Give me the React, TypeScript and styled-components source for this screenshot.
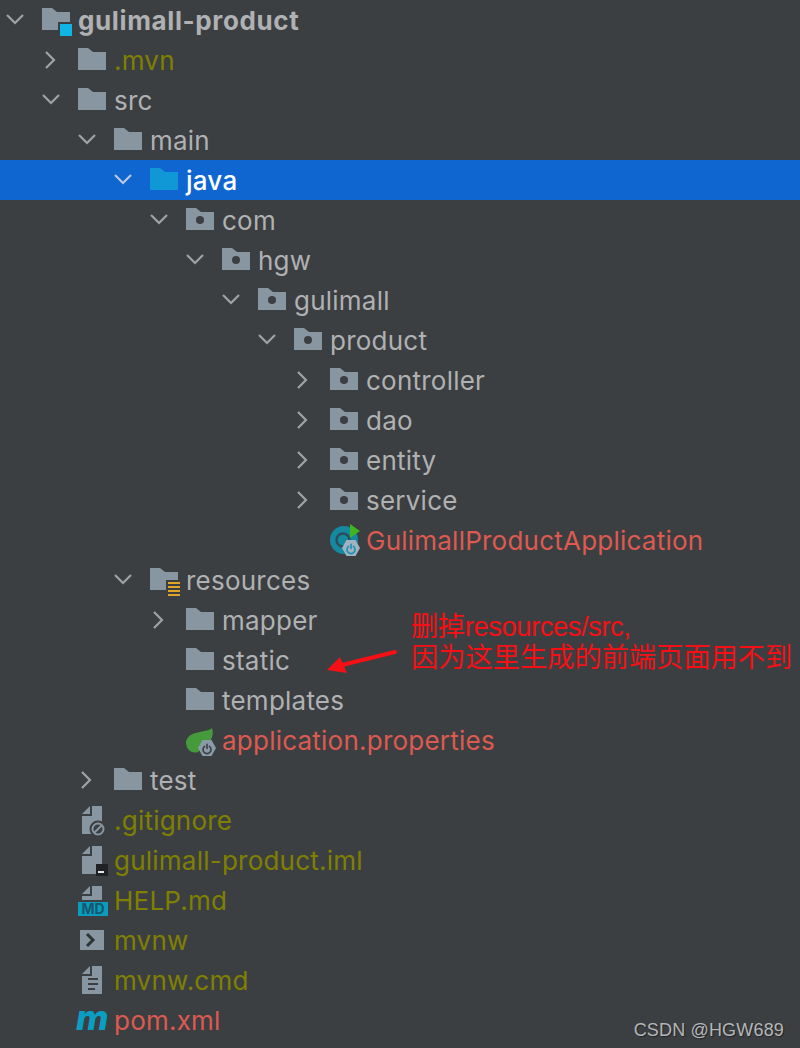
import styled, {createGlobalStyle} from "styled-components";

const GlobalStyle = createGlobalStyle`
  html, body {
    margin: 0;
    padding: 0;
    background: #3c3f41;
  }
`

const Page = styled.div`
  position: relative;
  width: 800px;
  height: 1048px;
  overflow: hidden;
  background: #3c3f41;
  font-family: "Inter", "Noto Sans", sans-serif;
`

const Tree = styled.ul`
  list-style: none;
  margin: 0;
  padding: 0;
`

const Row = styled.li<{$depth: number; $selected?: boolean}>`
  display: flex;
  align-items: center;
  height: 40px;
  padding-left: ${(p) => p.$depth * 36}px;
  background: ${(p) => (p.$selected ? "#0f66d0" : "transparent")};
`

const ArrowSlot = styled.svg`
  flex: none;
  width: 42px;
  height: 40px;
`

const IconSlot = styled.svg`
  flex: none;
  width: 36px;
  height: 40px;
  overflow: visible;
`

const colors = {
  normal: "#afb1b3",
  ignored: "#808000",
  modified: "#dc5a50",
  selected: "#ffffff",
}

type Tone = keyof typeof colors

const Label = styled.span<{$tone: Tone; $bold?: boolean}>`
  font-size: 26px;
  line-height: 38px;
  padding-top: 2px;
  white-space: nowrap;
  letter-spacing: ${(p) => (p.$bold ? 0.62 : 0.23)}px;
  font-weight: ${(p) => (p.$bold ? 700 : p.$tone === "selected" ? 500 : 400)};
  color: ${(p) => colors[p.$tone]};
`

const Note = styled.div`
  position: absolute;
  left: 411px;
  top: 611px;
  font-family: "Liberation Sans", "Noto Sans CJK SC", sans-serif;
  font-size: 27.2px;
  color: #f60f14;
  white-space: nowrap;
`

const NoteLine = styled.div<{$tight?: boolean}>`
  height: 31px;
  line-height: 31px;
  letter-spacing: ${(p) => (p.$tight ? "-0.35px" : "0.05px")};
`

const NoteArrow = styled.svg`
  position: absolute;
  left: 320px;
  top: 640px;
  width: 84px;
  height: 40px;
`

const Watermark = styled.div`
  position: absolute;
  right: 16px;
  top: 1019px;
  font-family: "Liberation Sans", Arial, sans-serif;
  font-size: 18px;
  line-height: 22px;
  letter-spacing: 0.17px;
  color: #b4b6b8;
  text-shadow: 1px 1px 1px rgba(0, 0, 0, 0.45);
  white-space: nowrap;
`

const GREY = "#8796a0"
const BG = "#3c3f41"
const FOLDER_D = "M0 8H10L15 12H28V30H0Z"
const FILE_D = "M14 6H24V34H4V16H14Z"

const Folder = ({color = GREY}: {color?: string}) => <path d={FOLDER_D} fill={color}/>

const FileBody = () => (
  <>
    <path d="M4 14L12 6V14Z" fill={GREY}/>
    <path d={FILE_D} fill={GREY}/>
  </>
)

const Power = ({x, y, color}: {x: number; y: number; color: string}) => (
  <g fill="none" stroke={color} strokeWidth="1.6" strokeLinecap="round">
    <path d={`M${x - 2.4} ${y - 2.6}A4 4 0 1 0 ${x + 2.4} ${y - 2.6}`}/>
    <path d={`M${x} ${y - 4.6}V${y - 0.6}`}/>
  </g>
)

const Hexagon = ({x, y, color}: {x: number; y: number; color: string}) => (
  <path
    d={`M${x - 4.5} ${y - 8}H${x + 4.5}L${x + 9} ${y}L${x + 4.5} ${y + 8}H${x - 4.5}L${x - 9} ${y}Z`}
    fill={color}
  />
)

const icons = {
  module: (
    <>
      <Folder/>
      <rect x="16" y="22" width="16" height="16" fill={BG}/>
      <rect x="18" y="24" width="12" height="12" fill="#0fb5e5"/>
    </>
  ),
  folder: <Folder/>,
  source: <Folder color="#0f97d6"/>,
  pkg: (
    <>
      <Folder/>
      <circle cx="14" cy="20" r="4" fill={BG}/>
    </>
  ),
  resources: (
    <>
      <Folder/>
      <rect x="16" y="20" width="16" height="18" fill={BG}/>
      <path d="M18 22H30V24H18ZM18 26H30V28H18ZM18 30H30V32H18ZM18 34H30V36H18Z" fill="#e0a526"/>
    </>
  ),
  app: (
    <>
      <circle cx="14" cy="20" r="14" fill="#14899f"/>
      <circle cx="13" cy="20" r="6.5" fill="none" stroke="#2c4d5c" strokeWidth="2.4"/>
      <path d="M20 4L30 11L20 18Z" fill="#3fb521"/>
      <Hexagon x={21} y={28} color="#9fb3c2"/>
      <Power x={21} y={29} color="#1a8fb0"/>
    </>
  ),
  spring: (
    <>
      <path d="M0 22C1 15 8 13 14 12C19 11 24 10 26 8C28 13 26 20 22 24L12 32C6 34 0 30 0 22Z" fill="#459a3c"/>
      <Hexagon x={21} y={28} color="#8a9ba8"/>
      <Power x={21} y={29} color={BG}/>
    </>
  ),
  gitignore: (
    <>
      <FileBody/>
      <circle cx="20" cy="29" r="8.5" fill={BG}/>
      <circle cx="20" cy="29" r="5.5" fill="none" stroke={GREY} strokeWidth="2"/>
      <path d="M16 33L24 25" stroke={GREY} strokeWidth="2"/>
    </>
  ),
  iml: (
    <>
      <FileBody/>
      <rect x="18" y="24" width="12" height="12" fill="#1f2123"/>
      <rect x="20" y="31" width="6" height="2" fill="#e6e6e6"/>
    </>
  ),
  markdown: (
    <>
      <path d="M4 14L12 6V14Z" fill={GREY}/>
      <path d="M4 20V16H14V6H24V20Z" fill={GREY}/>
      <rect x="0" y="22" width="30" height="14" fill="#0b9cbd"/>
      <text x="15" y="34" textAnchor="middle" fontSize="14" fontWeight="700" fontFamily="Inter, sans-serif" fill="#16566e">MD</text>
    </>
  ),
  shell: (
    <>
      <rect x="2" y="10" width="24" height="20" fill={GREY}/>
      <path d="M9 14L15 20L9 26" fill="none" stroke="#2f3436" strokeWidth="3"/>
    </>
  ),
  script: (
    <>
      <FileBody/>
      <path d="M10 19H20M10 24H20M10 29H17" stroke={BG} strokeWidth="2"/>
    </>
  ),
  maven: (
    <text x="-2" y="30" fontSize="35" fontWeight="800" fontStyle="italic" fontFamily="Inter, sans-serif" fill="#0a9fc2">m</text>
  ),
}

type IconName = keyof typeof icons

type Item = {
  depth: number;
  name: string;
  icon: IconName;
  tone?: Tone;
  arrow?: "open" | "closed";
}

const items: Item[] = [
  {depth: 0, name: "gulimall-product", icon: "module", arrow: "open"},
  {depth: 1, name: ".mvn", icon: "folder", tone: "ignored", arrow: "closed"},
  {depth: 1, name: "src", icon: "folder", arrow: "open"},
  {depth: 2, name: "main", icon: "folder", arrow: "open"},
  {depth: 3, name: "java", icon: "source", tone: "selected", arrow: "open"},
  {depth: 4, name: "com", icon: "pkg", arrow: "open"},
  {depth: 5, name: "hgw", icon: "pkg", arrow: "open"},
  {depth: 6, name: "gulimall", icon: "pkg", arrow: "open"},
  {depth: 7, name: "product", icon: "pkg", arrow: "open"},
  {depth: 8, name: "controller", icon: "pkg", arrow: "closed"},
  {depth: 8, name: "dao", icon: "pkg", arrow: "closed"},
  {depth: 8, name: "entity", icon: "pkg", arrow: "closed"},
  {depth: 8, name: "service", icon: "pkg", arrow: "closed"},
  {depth: 8, name: "GulimallProductApplication", icon: "app", tone: "modified"},
  {depth: 3, name: "resources", icon: "resources", arrow: "open"},
  {depth: 4, name: "mapper", icon: "folder", arrow: "closed"},
  {depth: 4, name: "static", icon: "folder"},
  {depth: 4, name: "templates", icon: "folder"},
  {depth: 4, name: "application.properties", icon: "spring", tone: "modified"},
  {depth: 2, name: "test", icon: "folder", arrow: "closed"},
  {depth: 1, name: ".gitignore", icon: "gitignore", tone: "ignored"},
  {depth: 1, name: "gulimall-product.iml", icon: "iml", tone: "ignored"},
  {depth: 1, name: "HELP.md", icon: "markdown", tone: "ignored"},
  {depth: 1, name: "mvnw", icon: "shell", tone: "ignored"},
  {depth: 1, name: "mvnw.cmd", icon: "script", tone: "ignored"},
  {depth: 1, name: "pom.xml", icon: "maven", tone: "modified"},
]

const Arrow = ({kind, color}: {kind?: "open" | "closed"; color: string}) => (
  <ArrowSlot viewBox="0 0 42 40">
    {kind === "open" && <path d="M7 15L15 23L23 15" fill="none" stroke={color} strokeWidth="2.2"/>}
    {kind === "closed" && <path d="M10 12L18 20L10 28" fill="none" stroke={color} strokeWidth="2.2"/>}
  </ArrowSlot>
)

export default function App() {
  return (
    <Page>
      <GlobalStyle/>
      <Tree>
        {items.map((item) => {
          const tone = item.tone ?? "normal";
          return (
            <Row key={item.name} $depth={item.depth} $selected={tone === "selected"}>
              <Arrow kind={item.arrow} color={tone === "selected" ? "#b9c8dc" : "#a0a3a5"}/>
              <IconSlot viewBox="0 0 36 40">{icons[item.icon]}</IconSlot>
              <Label $tone={tone} $bold={item.depth === 0}>{item.name}</Label>
            </Row>
          );
        })}
      </Tree>

      <Note>
        <NoteLine $tight>删掉resources/src,</NoteLine>
        <NoteLine>因为这里生成的前端页面用不到</NoteLine>
      </Note>
      <NoteArrow viewBox="0 0 84 40">
        <path d="M75 12L22 25" stroke="#f60f14" strokeWidth="4" strokeLinecap="round"/>
        <path d="M7 30L20 17L27 33Z" fill="#f60f14"/>
      </NoteArrow>
      <Watermark>CSDN @HGW689</Watermark>
    </Page>
  )
}
